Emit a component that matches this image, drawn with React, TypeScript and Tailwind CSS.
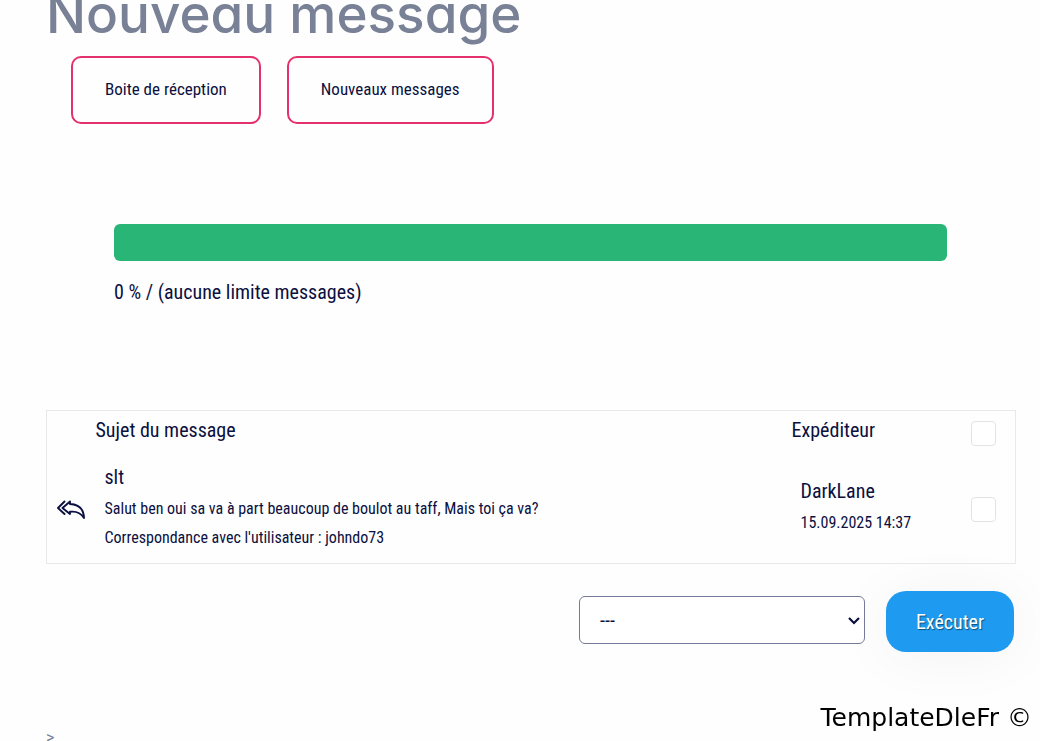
import React, { useState } from 'react';

interface Message {
  id: number;
  subject: string;
  preview: string;
  correspondence: string;
  sender: string;
  date: string;
}

const messages: Message[] = [
  {
    id: 1,
    subject: 'slt',
    preview: 'Salut ben oui sa va à part beaucoup de boulot au taff, Mais toi ça va?',
    correspondence: "Correspondance avec l'utilisateur : johndo73",
    sender: 'DarkLane',
    date: '15.09.2025 14:37',
  },
];

function ReplyAllIcon() {
  return (
    <svg width="30" height="20" viewBox="0 0 30 20" fill="none" stroke="currentColor" strokeWidth="1.900" strokeLinejoin="round" strokeLinecap="round" aria-hidden="true">
      <path d="M8.500 1.500 2 8l6.500 6" />
      <path d="M14 1.500 6.500 8l7.500 6v-2.200c6-.8 10.500.700 14 6.200C27.800 10 23.500 4.500 14 4z" />
    </svg>
  );
}

function CheckBox({ label, checked, onChange }: { label: string; checked: boolean; onChange: () => void }) {
  return (
    <input
      type="checkbox"
      aria-label={label}
      checked={checked}
      onChange={onChange}
      className="block size-[25px] appearance-none rounded border border-[#e3e3e6] bg-white checked:bg-[#1e9bf0]"
    />
  );
}

export default function App() {
  const [selected, setSelected] = useState<number[]>([]);
  const allSelected = selected.length === messages.length;

  const toggle = (id: number) =>
    setSelected(selected.includes(id) ? selected.filter((s) => s !== id) : [...selected, id]);

  return (
    <div className="bg-[#fefefe] pl-[46px] pr-6 font-['Roboto_Condensed','Liberation_Sans_Narrow',sans-serif] text-[#0b1040]">
      <h1 className="-mt-2.5 h-[66px] whitespace-nowrap font-['Inter',sans-serif] text-[53px] leading-[48px] font-medium text-[#798197] [font-feature-settings:'cv11']">
        Nouveau message
      </h1>

      <nav className="flex gap-[26px] pl-[25px] text-[17px]">
        <a href="#inbox" className="flex h-[68px] items-center rounded-[10px] border-2 border-[#e5316b] px-8">
          Boite de réception
        </a>
        <a href="#new" className="flex h-[68px] items-center rounded-[10px] border-2 border-[#e5316b] px-8">
          Nouveaux messages
        </a>
      </nav>

      {/* Mailbox usage */}
      <div className="mt-[100px] pl-[68px] pr-[69px] text-xl">
        <div className="h-[37px] rounded-md bg-[#29b576]" />
        <p className="mt-[15px] leading-8">0 % / (aucune limite messages)</p>
      </div>

      <form className="mt-[102px]" onSubmit={(e) => e.preventDefault()}>
        <table className="w-full table-fixed border border-[#e9e9eb] text-left">
          <colgroup>
            <col className="w-[49px]" />
            <col />
            <col className="w-[179px]" />
            <col className="w-[45px]" />
          </colgroup>
          <thead>
            <tr className="h-[46px] align-top text-xl leading-[38px]">
              <td />
              <th className="font-normal">Sujet du message</th>
              <th className="font-normal">Expéditeur</th>
              <th className="pt-2.5">
                <CheckBox
                  label="Tout sélectionner"
                  checked={allSelected}
                  onChange={() => setSelected(allSelected ? [] : messages.map((m) => m.id))}
                />
              </th>
            </tr>
          </thead>
          <tbody>
            {messages.map((message) => (
              <tr key={message.id} className="h-[107px] align-top">
                <td className="pl-[9px] align-middle">
                  <ReplyAllIcon />
                </td>
                <td className="pt-[3px] pl-[9px] leading-[29px]">
                  <a href="#message" className="block text-xl leading-[34px]">{message.subject}</a>
                  <p>{message.preview}</p>
                  <p>{message.correspondence}</p>
                </td>
                <td className="pt-[17px] pl-[9px] leading-[29px]">
                  <a href="#user" className="block text-xl leading-[34px]">{message.sender}</a>
                  <p>{message.date}</p>
                </td>
                <td className="align-middle">
                  <CheckBox
                    label={`Sélectionner ${message.subject}`}
                    checked={selected.includes(message.id)}
                    onChange={() => toggle(message.id)}
                  />
                </td>
              </tr>
            ))}
          </tbody>
        </table>

        <div className="mt-[27px] flex items-center justify-end gap-[21px] pr-0.5">
          <div className="relative mb-1">
            <select
              aria-label="Action"
              className="block h-12 w-[286px] appearance-none rounded-md border border-[#77799a] bg-white px-5 text-xl"
            >
              <option>---</option>
              <option>Supprimer</option>
            </select>
            <svg className="pointer-events-none absolute top-5 right-[5px]" width="12" height="10" viewBox="0 0 12 10" fill="none" stroke="currentColor" strokeWidth="2.200" aria-hidden="true">
              <path d="M1 2l5 5 5-5" />
            </svg>
          </div>
          <button
            type="submit"
            className="h-[61px] w-32 rounded-[20px] bg-[#1e9bf0] text-xl text-white shadow-[0_4px_60px_rgba(0,0,0,0.05)] text-shadow-[1px_1px_1px_rgba(0,0,0,0.5)]"
          >
            Exécuter
          </button>
        </div>
      </form>

      <p className="mt-[76px] font-['Roboto',sans-serif] leading-5 text-[#798197]">&gt;</p>

      <footer className="fixed right-2 bottom-[5px] font-['DejaVu_Sans',sans-serif] text-[25px] text-black">
        TemplateDleFr ©
      </footer>
    </div>
  );
}
